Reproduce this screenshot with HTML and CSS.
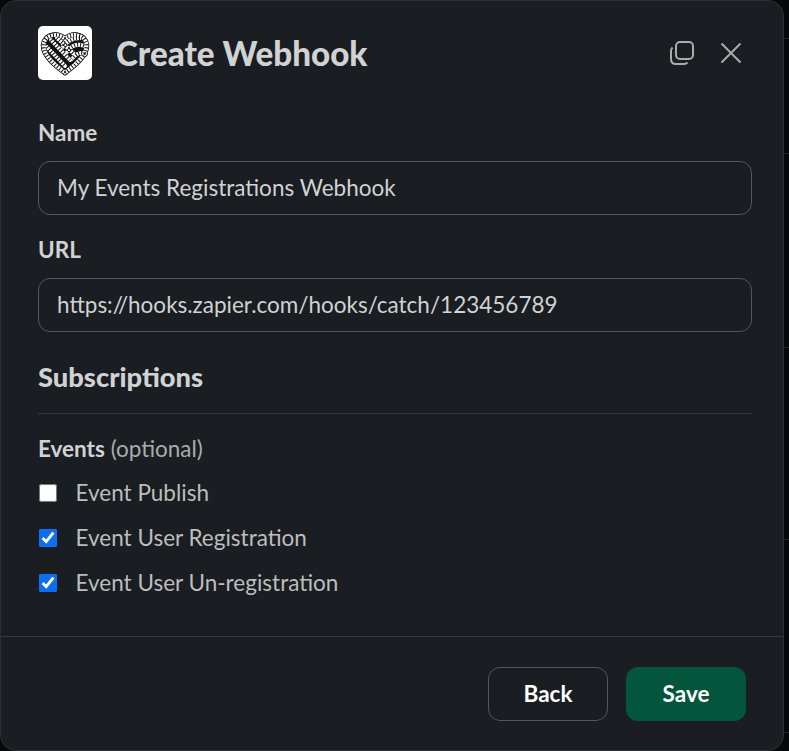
FILE: index.html
```html
<!DOCTYPE html>
<html lang="en">
<head>
<meta charset="utf-8">
<title>Create Webhook</title>
<link rel="stylesheet" href="styles.css">
</head>
<body>
<div class="modal">
  <header class="head">
    <div class="logo">
      <svg width="50" height="46" viewBox="0 0 50 46" fill="none">
        <path class="rope-base" d="M25 44C17 38 3 30 1.500 18C1 8 8 2.500 15 2.500C19 2.500 23 4.500 25 7.500C27 4.500 31 2.500 35 2.500C42 2.500 49 8 48.500 18C47 30 33 38 25 44Z"/>
        <g class="strand-edge">
          <path d="M25 9C19 3 5 3 3.500 15C3 26 16 36 25 42.500"/>
          <path d="M25 9C31 3 45 3 46.500 15C47 26 34 36 25 42.500"/>
          <path d="M40 8C32 8 26 12 22 18"/>
          <path d="M44 16C37 13 31 16 27 22"/>
          <path d="M45 24C40 21 36 24 32 29"/>
          <path d="M11 10L30 30"/>
          <path d="M7 17L25 36"/>
          <path d="M17 8L34 24"/>
        </g>
        <g class="strand-core">
          <path d="M25 9C19 3 5 3 3.500 15C3 26 16 36 25 42.500"/>
          <path d="M25 9C31 3 45 3 46.500 15C47 26 34 36 25 42.500"/>
          <path d="M40 8C32 8 26 12 22 18"/>
          <path d="M44 16C37 13 31 16 27 22"/>
          <path d="M45 24C40 21 36 24 32 29"/>
          <path d="M11 10L30 30"/>
          <path d="M7 17L25 36"/>
          <path d="M17 8L34 24"/>
        </g>
        <g class="strand-twist">
          <path d="M25 9C19 3 5 3 3.500 15C3 26 16 36 25 42.500"/>
          <path d="M25 9C31 3 45 3 46.500 15C47 26 34 36 25 42.500"/>
          <path d="M40 8C32 8 26 12 22 18"/>
          <path d="M44 16C37 13 31 16 27 22"/>
          <path d="M45 24C40 21 36 24 32 29"/>
          <path d="M11 10L30 30"/>
          <path d="M7 17L25 36"/>
          <path d="M17 8L34 24"/>
        </g>
      </svg>
    </div>
    <h1 class="title">Create Webhook</h1>
    <div class="actions">
      <svg width="26" height="26" viewBox="0 0 26 26" fill="none" class="icon">
        <rect x="7" y="2" width="17" height="17" rx="4"/>
        <path d="M3.500 7.500C2.500 8.500 2 9.500 2 11V19C2 22 4 24 7 24H15C16.500 24 17.500 23.500 18.500 22.500"/>
      </svg>
      <svg width="24" height="24" viewBox="0 0 24 24" fill="none" class="icon">
        <path d="M2.500 2.500L21.500 21.500M21.500 2.500L2.500 21.500"/>
      </svg>
    </div>
  </header>

  <main class="body">
    <label class="field">
      <span class="label">Name</span>
      <input class="input" type="text" value="My Events Registrations Webhook">
    </label>
    <label class="field">
      <span class="label">URL</span>
      <input class="input" type="text" value="https://hooks.zapier.com/hooks/catch/123456789">
    </label>
    <h2 class="section">Subscriptions</h2>
    <div class="group">
      <div class="group-label"><b>Events</b> <span class="opt">(optional)</span></div>
      <label class="check"><input type="checkbox"><span>Event Publish</span></label>
      <label class="check"><input type="checkbox" checked><span>Event User Registration</span></label>
      <label class="check"><input type="checkbox" checked><span>Event User Un-registration</span></label>
    </div>
  </main>

  <footer class="foot">
    <button class="btn btn-back" type="button">Back</button>
    <button class="btn btn-save" type="button">Save</button>
  </footer>
</div>
</body>
</html>
```

FILE: styles.css
```css
* { box-sizing: border-box; }
html, body { margin: 0; height: 100%; }
body {
  background-color: #07080a;
  background-image:
    linear-gradient(#222427, #222427),
    linear-gradient(#222427, #222427),
    linear-gradient(#222427, #222427),
    linear-gradient(#222427, #222427),
    linear-gradient(#222427, #222427);
  background-repeat: no-repeat;
  background-size: 100% 1px;
  background-position: 0 38px, 0 153px, 0 347px, 0 539px, 0 732px;
  font-family: Lato, "Noto Sans", sans-serif;
  color: #d1d2d3;
  overflow: hidden;
}
.modal {
  width: 784px;
  height: 751px;
  background: #1a1d21;
  border: 1px solid #2e3033;
  border-radius: 16px;
  display: flex;
  flex-direction: column;
}
.head {
  display: flex;
  align-items: center;
  height: 104px;
  padding: 0 40px 0 37px;
}
.logo {
  width: 54px;
  height: 54px;
  background: #fff;
  border-radius: 5px;
  display: flex;
  align-items: center;
  justify-content: center;
  flex: none;
}
.rope-base { fill: #111; }
.strand-edge path { stroke: #111; stroke-width: 5.500; stroke-linecap: round; }
.strand-core path { stroke: #fff; stroke-width: 3.800; stroke-linecap: round; }
.strand-twist path { stroke: #111; stroke-width: 3.800; stroke-dasharray: 1 2; }
.title {
  margin: 0 0 0 24px;
  font-size: 33.200px;
  line-height: 40px;
  font-weight: 900;
  color: #d1d2d3;
  flex: 1;
}
.actions { display: flex; align-items: center; gap: 24px; }
.icon { stroke: #ababad; stroke-width: 2; display: block; }
.body { padding: 14px 31px 0 37px; flex: 1; }
.field { display: block; margin-bottom: 21px; }
.label {
  display: block;
  font-size: 22.500px;
  line-height: 28px;
  font-weight: 700;
  margin-bottom: 14px;
}
.input {
  display: block;
  width: 100%;
  height: 54px;
  background: transparent;
  border: 1px solid #55575a;
  border-radius: 12px;
  padding: 0 18px 2px;
  font: 400 22.500px Lato, sans-serif;
  color: #d1d2d3;
  outline: none;
}
.section {
  margin: 28px 0 0;
  font-size: 27.300px;
  line-height: 34px;
  font-weight: 900;
  padding-bottom: 19px;
  border-bottom: 1px solid #35373b;
}
.group { padding-top: 20px; }
.group-label { font-size: 22.500px; line-height: 30px; margin-bottom: 6px; }
.group-label b { font-weight: 700; }
.opt { color: #ababad; }
.check {
  display: flex;
  align-items: center;
  height: 45px;
  font-size: 22.500px;
  color: #bcbdbe;
}
.check input {
  margin: 0 19px 0 0.500px;
  width: 18px;
  height: 18px;
  accent-color: #0b6ff0;
  flex: none;
}
.foot {
  height: 114px;
  border-top: 1px solid #35373b;
  display: flex;
  justify-content: flex-end;
  align-items: flex-start;
  gap: 18px;
  padding: 30px 37px 0 0;
}
.btn {
  width: 120px;
  height: 54px;
  border-radius: 12px;
  padding: 0 0 2px;
  font: 700 22.500px Lato, sans-serif;
  color: #fff;
  cursor: pointer;
}
.btn-back { background: transparent; border: 1px solid #55575a; }
.btn-save { background: #03563b; border: none; }
```
